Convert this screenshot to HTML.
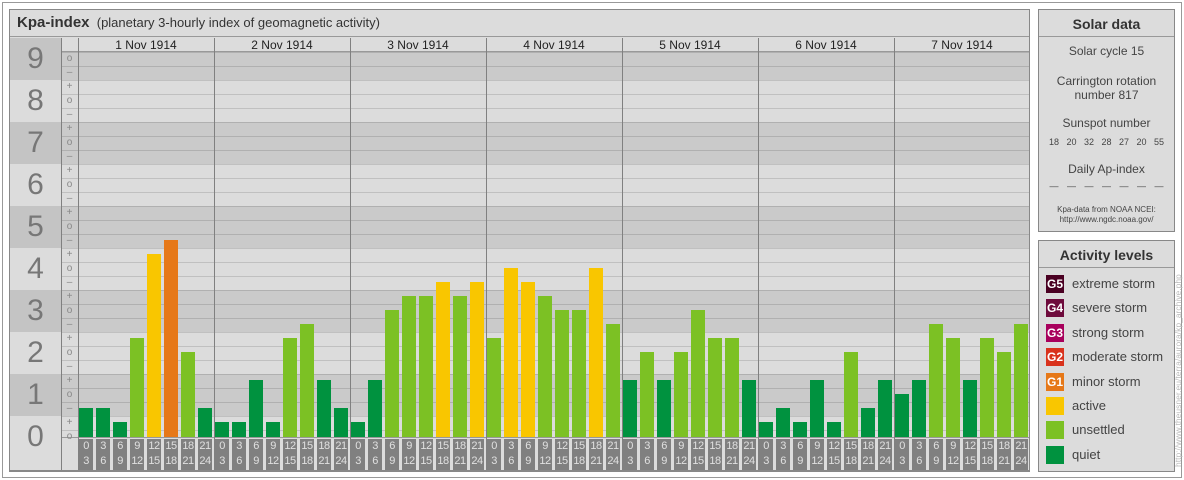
<!DOCTYPE html>
<html><head><meta charset="utf-8"><style>
*{margin:0;padding:0;box-sizing:border-box}
body{width:1184px;height:480px;background:#fff;position:relative;overflow:hidden;font-family:"Liberation Sans",sans-serif;color:#333}
div{position:absolute}
.d{background:#cacaca}.l{background:#dcdcdc}
.q{background:#00923f}.u{background:#7cc124}.a{background:#f9c600}.g1{background:#e67818}
.b{width:14px;bottom:0}
.lb{width:14px;height:31px;top:439px;background:#808080;color:#e0e0e0;font-size:11px;line-height:15px;text-align:center;letter-spacing:-0.5px}
.num{left:10px;width:51px;height:42px;font-size:30px;color:#777;text-align:center;line-height:42px}
.sg{left:61px;width:17px;font-size:10px;color:#888;text-align:center;line-height:14px;height:14px}
.dt{top:38px;width:136px;height:14px;font-size:12px;line-height:14px;text-align:center;color:#222}
.vl{width:1px;background:#808080}
.sw{left:1046px;width:18px;height:18px;color:#fff;font-size:12px;line-height:18px;text-align:center;font-weight:bold}
.st{left:1072px;font-size:13px;color:#444;line-height:18px}
.c{left:1039px;width:135px;text-align:center;color:#444}
</style></head><body>
<div style="left:2px;top:2px;width:1180px;height:476px;border:1px solid #999"></div>
<div style="left:9px;top:9px;width:1021px;height:463px;border:1px solid #888;background:#dcdcdc"></div>
<div style="left:10px;top:10px;width:1019px;height:27px;border-bottom:1px solid #999;font-size:13px;line-height:26px;padding-left:7px;color:#333"><b style="font-size:15px">Kpa-index</b>&nbsp; (planetary 3-hourly index of geomagnetic activity)</div>
<!-- number column bands -->
<div class="num" style="top:38px;background:#c4c4c4">9</div>
<div class="num" style="top:80px">8</div>
<div class="num" style="top:122px;background:#c4c4c4">7</div>
<div class="num" style="top:164px">6</div>
<div class="num" style="top:206px;background:#c4c4c4">5</div>
<div class="num" style="top:248px">4</div>
<div class="num" style="top:290px;background:#c4c4c4">3</div>
<div class="num" style="top:332px">2</div>
<div class="num" style="top:374px;background:#c4c4c4">1</div>
<div class="num" style="top:416px">0</div>
<!-- plot bands (sign column + plot) -->
<div class="d" style="left:62px;top:52px;width:967px;height:28px"></div>
<div class="d" style="left:62px;top:122px;width:967px;height:42px"></div>
<div class="d" style="left:62px;top:206px;width:967px;height:42px"></div>
<div class="d" style="left:62px;top:290px;width:967px;height:42px"></div>
<div class="d" style="left:62px;top:374px;width:967px;height:42px"></div>
<div style="left:62px;top:52px;width:967px;height:385px;background:repeating-linear-gradient(to bottom,rgba(0,0,0,0.13) 0,rgba(0,0,0,0.13) 1px,transparent 1px,transparent 14px)"></div>
<div style="left:62px;top:51px;width:967px;height:1px;background:#999"></div>
<div style="left:62px;top:437px;width:967px;height:1px;background:#999"></div>
<!-- signs -->
<div class="sg" style="top:52px">o</div><div class="sg" style="top:66px">–</div>
<div class="sg" style="top:80px">+</div><div class="sg" style="top:94px">o</div><div class="sg" style="top:108px">–</div>
<div class="sg" style="top:122px">+</div><div class="sg" style="top:136px">o</div><div class="sg" style="top:150px">–</div>
<div class="sg" style="top:164px">+</div><div class="sg" style="top:178px">o</div><div class="sg" style="top:192px">–</div>
<div class="sg" style="top:206px">+</div><div class="sg" style="top:220px">o</div><div class="sg" style="top:234px">–</div>
<div class="sg" style="top:248px">+</div><div class="sg" style="top:262px">o</div><div class="sg" style="top:276px">–</div>
<div class="sg" style="top:290px">+</div><div class="sg" style="top:304px">o</div><div class="sg" style="top:318px">–</div>
<div class="sg" style="top:332px">+</div><div class="sg" style="top:346px">o</div><div class="sg" style="top:360px">–</div>
<div class="sg" style="top:374px">+</div><div class="sg" style="top:388px">o</div><div class="sg" style="top:402px">–</div>
<div class="sg" style="top:416px">+</div><div class="sg" style="top:430px">o</div>
<!-- vertical lines -->
<div class="vl" style="left:61px;top:38px;height:432px"></div>
<div class="vl" style="left:78px;top:38px;height:432px"></div>
<div class="vl" style="left:214px;top:38px;height:432px"></div>
<div class="vl" style="left:350px;top:38px;height:432px"></div>
<div class="vl" style="left:486px;top:38px;height:432px"></div>
<div class="vl" style="left:622px;top:38px;height:432px"></div>
<div class="vl" style="left:758px;top:38px;height:432px"></div>
<div class="vl" style="left:894px;top:38px;height:432px"></div>
<div style="left:10px;top:470px;width:1019px;height:1px;background:#888"></div>
<!-- dates -->
<div class="dt" style="left:78px">1 Nov 1914</div>
<div class="dt" style="left:214px">2 Nov 1914</div>
<div class="dt" style="left:350px">3 Nov 1914</div>
<div class="dt" style="left:486px">4 Nov 1914</div>
<div class="dt" style="left:622px">5 Nov 1914</div>
<div class="dt" style="left:758px">6 Nov 1914</div>
<div class="dt" style="left:894px">7 Nov 1914</div>
<!-- bars -->
<div style="left:0;top:0;width:1030px;height:437px">
<div class="b q" style="left:79px;height:29px"></div><div class="b q" style="left:96px;height:29px"></div><div class="b q" style="left:113px;height:15px"></div><div class="b u" style="left:130px;height:99px"></div><div class="b a" style="left:147px;height:183px"></div><div class="b g1" style="left:164px;height:197px"></div><div class="b u" style="left:181px;height:85px"></div><div class="b q" style="left:198px;height:29px"></div>
<div class="b q" style="left:215px;height:15px"></div><div class="b q" style="left:232px;height:15px"></div><div class="b q" style="left:249px;height:57px"></div><div class="b q" style="left:266px;height:15px"></div><div class="b u" style="left:283px;height:99px"></div><div class="b u" style="left:300px;height:113px"></div><div class="b q" style="left:317px;height:57px"></div><div class="b q" style="left:334px;height:29px"></div>
<div class="b q" style="left:351px;height:15px"></div><div class="b q" style="left:368px;height:57px"></div><div class="b u" style="left:385px;height:127px"></div><div class="b u" style="left:402px;height:141px"></div><div class="b u" style="left:419px;height:141px"></div><div class="b a" style="left:436px;height:155px"></div><div class="b u" style="left:453px;height:141px"></div><div class="b a" style="left:470px;height:155px"></div>
<div class="b u" style="left:487px;height:99px"></div><div class="b a" style="left:504px;height:169px"></div><div class="b a" style="left:521px;height:155px"></div><div class="b u" style="left:538px;height:141px"></div><div class="b u" style="left:555px;height:127px"></div><div class="b u" style="left:572px;height:127px"></div><div class="b a" style="left:589px;height:169px"></div><div class="b u" style="left:606px;height:113px"></div>
<div class="b q" style="left:623px;height:57px"></div><div class="b u" style="left:640px;height:85px"></div><div class="b q" style="left:657px;height:57px"></div><div class="b u" style="left:674px;height:85px"></div><div class="b u" style="left:691px;height:127px"></div><div class="b u" style="left:708px;height:99px"></div><div class="b u" style="left:725px;height:99px"></div><div class="b q" style="left:742px;height:57px"></div>
<div class="b q" style="left:759px;height:15px"></div><div class="b q" style="left:776px;height:29px"></div><div class="b q" style="left:793px;height:15px"></div><div class="b q" style="left:810px;height:57px"></div><div class="b q" style="left:827px;height:15px"></div><div class="b u" style="left:844px;height:85px"></div><div class="b q" style="left:861px;height:29px"></div><div class="b q" style="left:878px;height:57px"></div>
<div class="b q" style="left:895px;height:43px"></div><div class="b q" style="left:912px;height:57px"></div><div class="b u" style="left:929px;height:113px"></div><div class="b u" style="left:946px;height:99px"></div><div class="b q" style="left:963px;height:57px"></div><div class="b u" style="left:980px;height:99px"></div><div class="b u" style="left:997px;height:85px"></div><div class="b u" style="left:1014px;height:113px"></div>
</div>
<!-- hour labels -->
<div class="lb" style="left:79px">0<br>3</div><div class="lb" style="left:96px">3<br>6</div><div class="lb" style="left:113px">6<br>9</div><div class="lb" style="left:130px">9<br>12</div><div class="lb" style="left:147px">12<br>15</div><div class="lb" style="left:164px">15<br>18</div><div class="lb" style="left:181px">18<br>21</div><div class="lb" style="left:198px">21<br>24</div>
<div class="lb" style="left:215px">0<br>3</div><div class="lb" style="left:232px">3<br>6</div><div class="lb" style="left:249px">6<br>9</div><div class="lb" style="left:266px">9<br>12</div><div class="lb" style="left:283px">12<br>15</div><div class="lb" style="left:300px">15<br>18</div><div class="lb" style="left:317px">18<br>21</div><div class="lb" style="left:334px">21<br>24</div>
<div class="lb" style="left:351px">0<br>3</div><div class="lb" style="left:368px">3<br>6</div><div class="lb" style="left:385px">6<br>9</div><div class="lb" style="left:402px">9<br>12</div><div class="lb" style="left:419px">12<br>15</div><div class="lb" style="left:436px">15<br>18</div><div class="lb" style="left:453px">18<br>21</div><div class="lb" style="left:470px">21<br>24</div>
<div class="lb" style="left:487px">0<br>3</div><div class="lb" style="left:504px">3<br>6</div><div class="lb" style="left:521px">6<br>9</div><div class="lb" style="left:538px">9<br>12</div><div class="lb" style="left:555px">12<br>15</div><div class="lb" style="left:572px">15<br>18</div><div class="lb" style="left:589px">18<br>21</div><div class="lb" style="left:606px">21<br>24</div>
<div class="lb" style="left:623px">0<br>3</div><div class="lb" style="left:640px">3<br>6</div><div class="lb" style="left:657px">6<br>9</div><div class="lb" style="left:674px">9<br>12</div><div class="lb" style="left:691px">12<br>15</div><div class="lb" style="left:708px">15<br>18</div><div class="lb" style="left:725px">18<br>21</div><div class="lb" style="left:742px">21<br>24</div>
<div class="lb" style="left:759px">0<br>3</div><div class="lb" style="left:776px">3<br>6</div><div class="lb" style="left:793px">6<br>9</div><div class="lb" style="left:810px">9<br>12</div><div class="lb" style="left:827px">12<br>15</div><div class="lb" style="left:844px">15<br>18</div><div class="lb" style="left:861px">18<br>21</div><div class="lb" style="left:878px">21<br>24</div>
<div class="lb" style="left:895px">0<br>3</div><div class="lb" style="left:912px">3<br>6</div><div class="lb" style="left:929px">6<br>9</div><div class="lb" style="left:946px">9<br>12</div><div class="lb" style="left:963px">12<br>15</div><div class="lb" style="left:980px">15<br>18</div><div class="lb" style="left:997px">18<br>21</div><div class="lb" style="left:1014px">21<br>24</div>
<!-- Solar data -->
<div style="left:1038px;top:9px;width:137px;height:223px;border:1px solid #888;background:#dcdcdc"></div>
<div style="left:1039px;top:10px;width:135px;height:27px;border-bottom:1px solid #999;text-align:center;font-weight:bold;font-size:14px;line-height:28px;color:#333">Solar data</div>
<div class="c" style="top:44px;font-size:12px;line-height:14px">Solar cycle 15</div>
<div class="c" style="top:74px;font-size:12px;line-height:14px">Carrington rotation<br>number 817</div>
<div class="c" style="top:116px;font-size:12px;line-height:14px">Sunspot number</div>
<div class="c" style="top:137px;font-size:9px;line-height:10px;word-spacing:5px">18 20 32 28 27 20 55</div>
<div class="c" style="top:162px;font-size:12px;line-height:14px">Daily Ap-index</div>
<div class="c" style="top:181px;font-size:9px;line-height:10px;word-spacing:6px">— — — — — — —</div>
<div class="c" style="top:205px;font-size:8px;line-height:10px">Kpa-data from NOAA NCEI:<br>http://www.ngdc.noaa.gov/</div>
<!-- Activity levels -->
<div style="left:1038px;top:240px;width:137px;height:232px;border:1px solid #888;background:#dcdcdc"></div>
<div style="left:1039px;top:241px;width:135px;height:27px;border-bottom:1px solid #999;text-align:center;font-weight:bold;font-size:14px;line-height:28px;color:#333">Activity levels</div>
<div class="sw" style="top:275px;background:#4a0022">G5</div><div class="st" style="top:275px">extreme storm</div>
<div class="sw" style="top:299px;background:#6e0b3c">G4</div><div class="st" style="top:299px">severe storm</div>
<div class="sw" style="top:324px;background:#a8005c">G3</div><div class="st" style="top:324px">strong storm</div>
<div class="sw" style="top:348px;background:#d9321c">G2</div><div class="st" style="top:348px">moderate storm</div>
<div class="sw g1" style="top:373px">G1</div><div class="st" style="top:373px">minor storm</div>
<div class="sw a" style="top:397px"></div><div class="st" style="top:397px">active</div>
<div class="sw u" style="top:421px"></div><div class="st" style="top:421px">unsettled</div>
<div class="sw q" style="top:446px"></div><div class="st" style="top:446px">quiet</div>
<div style="left:1070px;top:350px;width:220px;height:10px;font-size:8.5px;line-height:10px;color:#bbb;transform:rotate(-90deg);transform-origin:center;white-space:nowrap;left:1068px;top:352px">http://www.theusner.eu/terra/aurora/kp_archive.php</div>
</body></html>
